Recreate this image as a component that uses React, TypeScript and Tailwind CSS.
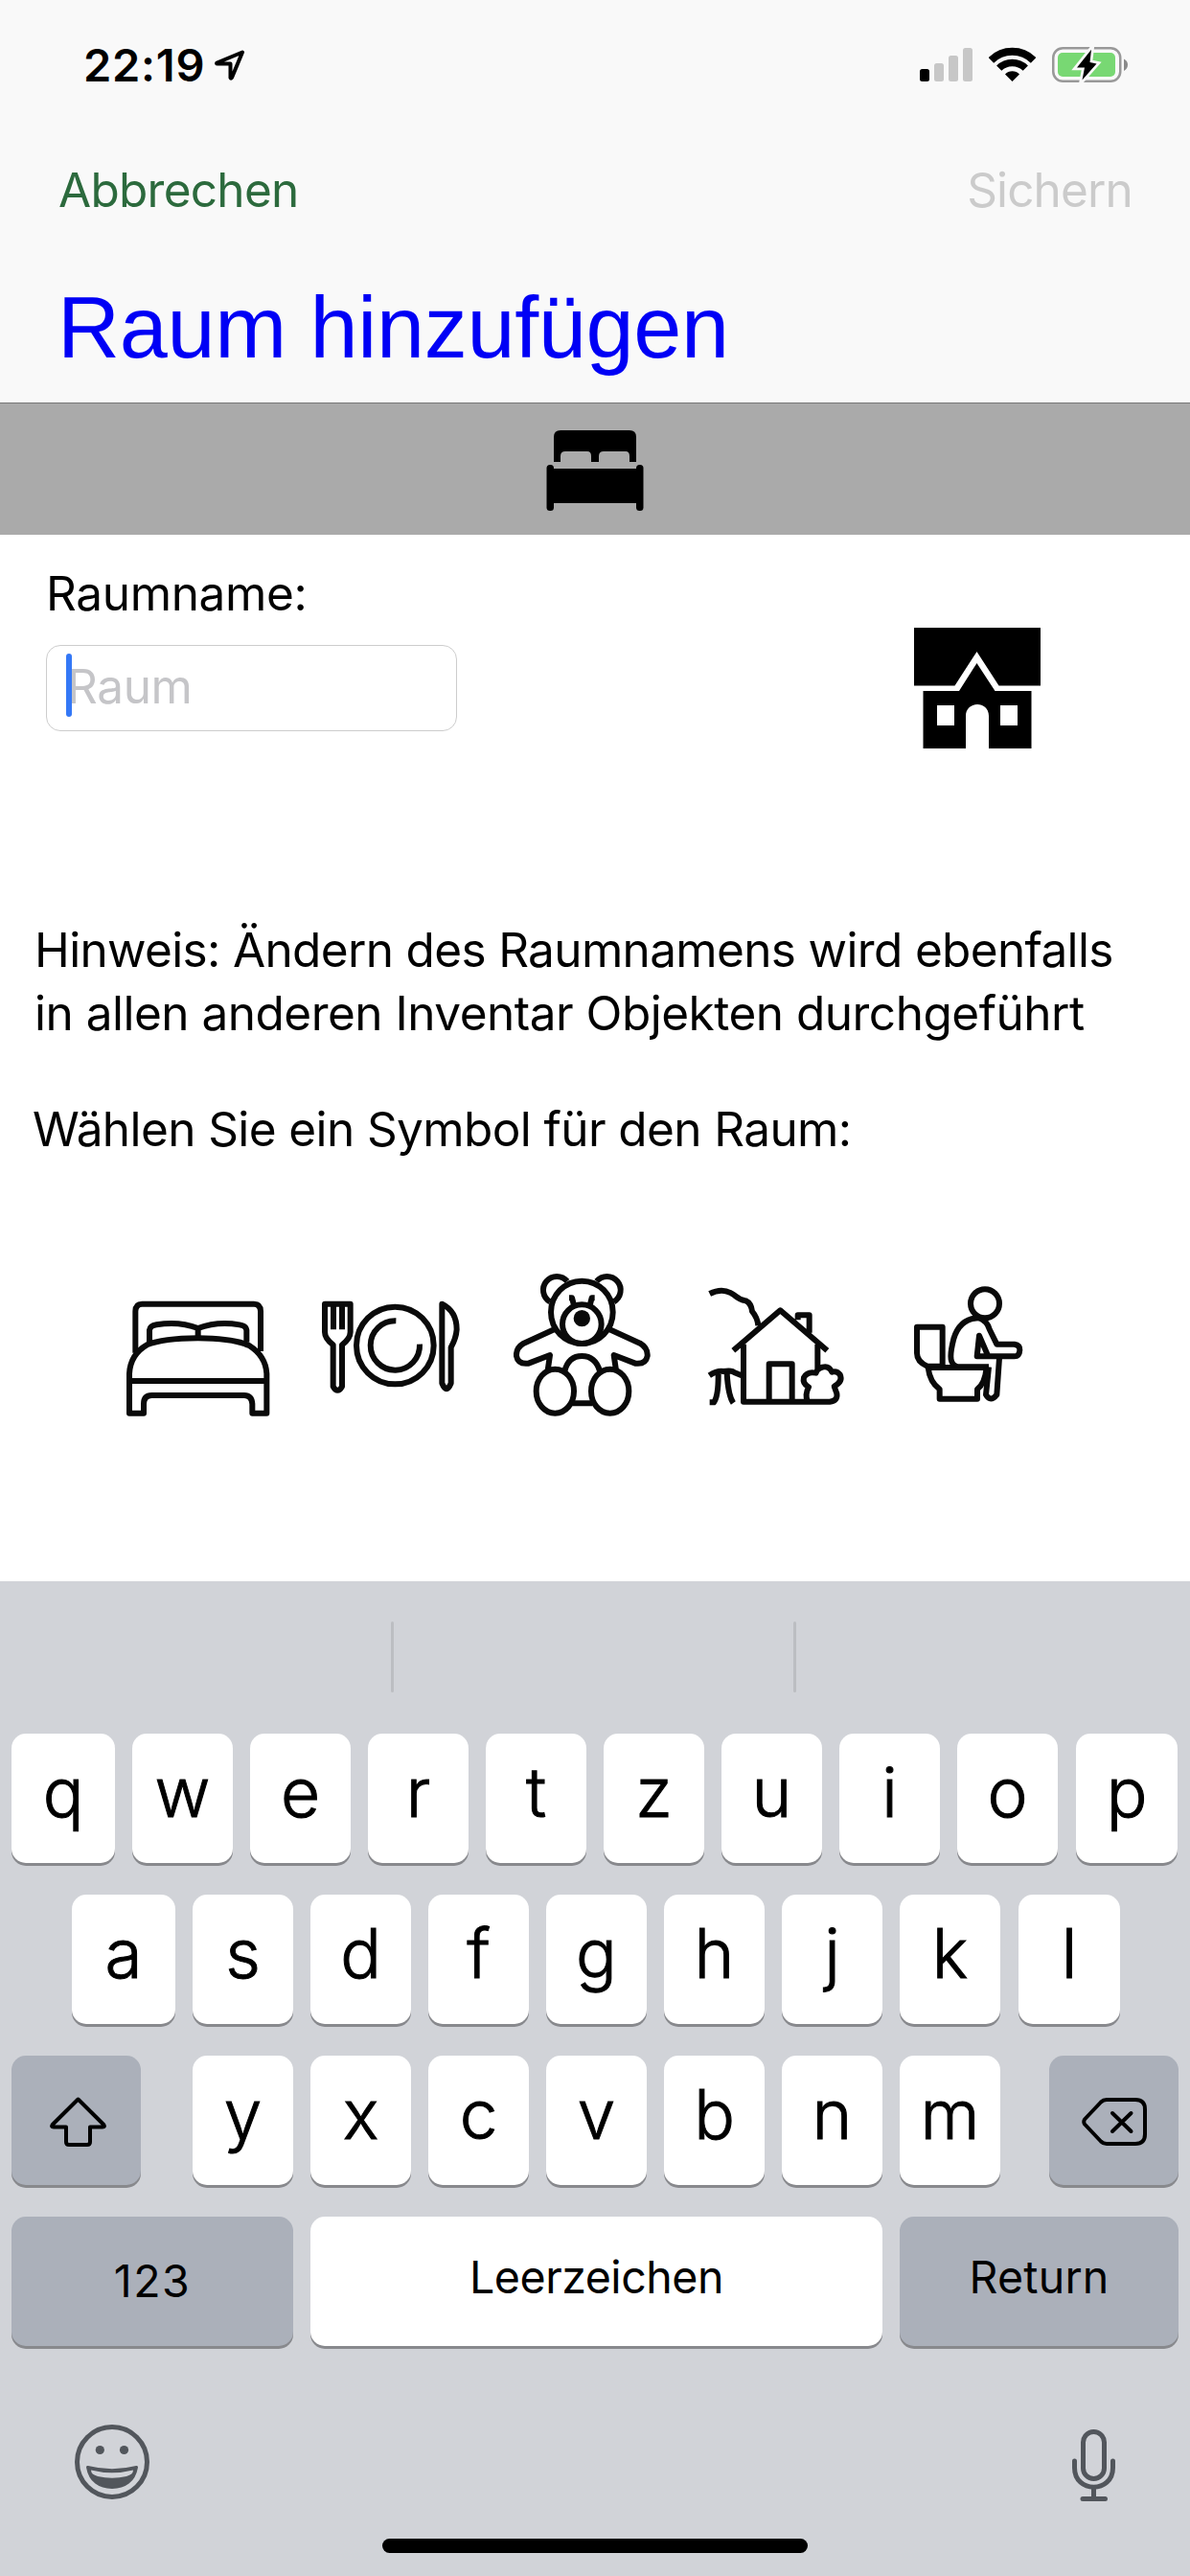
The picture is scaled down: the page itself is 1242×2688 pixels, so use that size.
import type { ReactNode } from "react";

const inter = "font-['Inter','Liberation_Sans',sans-serif]";

function StatusBar() {
  return (
    <div className="flex h-[120px] items-start justify-between pt-[40px] pr-[65px] pl-[87px]">
      <div className="flex">
        <span className="w-[137px] text-[47px] leading-[56px] font-semibold tracking-[0.77px]">22:19</span>
        <svg className="mt-[11px] h-[34px] w-[32px]" viewBox="0 0 32 34" fill="none" stroke="#000" strokeWidth="4" strokeLinejoin="round">
          <path d="M29 3.500L2.500 14.500Q1.500 15.500 3 15.500H16.500V30Q17 31.500 18 30Z" />
        </svg>
      </div>
      <div className="flex items-start gap-[17px] pt-[9px]">
        <svg className="h-[37px] w-[55px]" viewBox="0 0 55 37">
          <rect x="0" y="23" width="10" height="13" rx="2.500" />
          <g fill="#c7c7c7">
            <rect x="15" y="17" width="10" height="19" rx="2.500" />
            <rect x="30" y="9" width="10" height="27" rx="2.500" />
            <rect x="45" y="1" width="10" height="35" rx="2.500" />
          </g>
        </svg>
        <svg className="h-[37px] w-[49px]" viewBox="0 0 49 37" fill="none" stroke="#000">
          <path d="M2.400 13.900A31.300 31.300 0 0 1 46.600 13.900" strokeWidth="7.800" />
          <path d="M10.700 22.200A19.500 19.500 0 0 1 38.300 22.200" strokeWidth="7.400" />
          <path d="M24.500 36L17 28.500A10.500 10.500 0 0 1 32 28.500Z" fill="#000" stroke="none" />
        </svg>
        <svg className="h-[37px] w-[79px]" viewBox="0 0 79 37">
          <rect x="1.250" y="1.250" width="70" height="34.500" rx="10" fill="none" stroke="#999" strokeWidth="2.500" />
          <rect x="6" y="6" width="60" height="25" rx="5" fill="#78d873" />
          <path d="M75 12.500Q79 14.500 79 18.500T75 25Z" fill="#8a8a8a" />
          <path d="M41 2.700L39.500 16L46.500 17.500L31.500 34.500L34 21.500L26 21.500Z" stroke="#f9f9f9" strokeWidth="5.500" />
          <path d="M41 2.700L39.500 16L46.500 17.500L31.500 34.500L34 21.500L26 21.500Z" />
        </svg>
      </div>
    </div>
  );
}

function BedSolid() {
  return (
    <svg className="h-[84px] w-[102px]" viewBox="0 0 102 84">
      <path d="M8 33V7Q8 0 15 0H87Q94 0 94 7V33H87V27Q87 22 83 22H60Q55 22 55 27V33H47V27Q47 22 43 22H20Q15 22 15 27V33Z" />
      <rect x="4" y="40" width="94" height="36" />
      <rect x="0.500" y="36" width="7.500" height="48" rx="3.500" />
      <rect x="94" y="36" width="7.500" height="48" rx="3.500" />
    </svg>
  );
}

function HouseSolid() {
  return (
    <svg className="h-[126px] w-[132px]" viewBox="0 0 132 126">
      <path d="M0 0H132V60.500H88.500L65.500 25L42.500 60.500H0Z" />
      <path
        fillRule="evenodd"
        d="M9.500 66H47L65.500 37L84.500 66H122.500V126H78V92C78 76 54 76 54 92V126H9.500ZM24 81V102H42V81ZM90 81V102H108V81Z"
      />
    </svg>
  );
}

function RoomIcon({ viewBox, children }: { viewBox: string; children: ReactNode }) {
  return (
    <svg
      className="size-[150px] overflow-hidden"
      viewBox={viewBox}
      fill="none"
      stroke="#0a0a0a"
      strokeWidth="18"
      strokeLinejoin="round"
    >
      {children}
    </svg>
  );
}

function RoomIcons() {
  return (
    <div className="mt-[120px] flex gap-[52px] pl-[132px]">
      <RoomIcon viewBox="66 84 450 450">
        <path d="M94 335V205Q94 182 115 182H465Q486 182 486 205V330" />
        <path d="M138 302V264Q140 250 160 247Q230 235 290 258Q350 235 420 247Q440 250 442 264V302M290 258V288" />
        <path d="M75 524V400Q78 340 130 310Q180 290 290 289Q400 290 450 312Q502 345 505 400V524H460V495Q458 468 435 468H145Q120 468 120 495V524ZM80 423H500" />
      </RoomIcon>
      <RoomIcon viewBox="672 84 450 450">
        <path d="M687 182H767V270Q767 290 741 310V440Q727 465 713 440V310Q687 290 687 270ZM714 182V262M741 182V262" />
        <circle cx="907" cy="312" r="121" />
        <path d="M910 235A77 77 0 1 0 984 308" />
        <path d="M1054 182Q1100 205 1100 262Q1098 290 1082 318V430Q1068 465 1054 430Z" />
      </RoomIcon>
      <RoomIcon viewBox="108 84 450 450">
        <ellipse cx="322" cy="208" rx="97" ry="98" />
        <circle cx="322" cy="245" r="61" />
        <circle cx="322" cy="227" r="26" fill="#0a0a0a" stroke="none" />
        <path d="M282 163H291L297 186M362 163H353L347 186" />
        <path d="M276 111A42.500 42.500 0 1 0 222 175M368 111A42.500 42.500 0 1 1 422 175" />
        <path d="M235 262L140 305Q115 320 117 345Q122 372 155 368L222 342L215 390M409 262L504 305Q529 320 527 345Q522 372 489 368L422 342L429 390" />
        <ellipse cx="238" cy="455" rx="59" ry="69" />
        <ellipse cx="410" cy="455" rx="59" ry="69" />
        <path d="M268 392Q280 345 322 345Q364 345 378 392M292 493H354" />
      </RoomIcon>
      <RoomIcon viewBox="714 84 450 450">
        <path d="M722 150Q765 128 800 155Q815 168 835 172Q852 180 855 205Q872 225 874 250" />
        <path d="M796 328L943 202L1090 328M998 232V217H1034V272" />
        <path d="M828 308V488H1098Q1124 485 1120 462Q1116 452 1112 440Q1140 425 1130 403Q1120 390 1105 395Q1095 374 1075 380Q1058 385 1055 398Q1028 392 1017 412Q1012 432 1032 442Q1020 465 1028 485M1060 308V385M908 488V370H980V488" />
        <path d="M721 406Q745 390 765 393Q790 388 800 397L822 406M749 398Q750 470 735 490H722M776 398Q780 470 796 492" />
      </RoomIcon>
      <RoomIcon viewBox="184 83 450 450">
        <circle cx="448" cy="180" r="45" />
        <path d="M235 253H315V376H268Q235 362 235 335Z" />
        <path d="M430 225Q370 225 350 290Q336 345 344 362Q350 377 370 378H460M265 380H460" />
        <path d="M270 380Q275 425 306 448V478H424V448Q448 430 453 380" />
        <path d="M460 378L451 465Q465 490 485 465L493 350" />
        <path d="M430 225Q455 235 462 260L485 307H540Q558 310 557 325Q556 345 540 345H423L430 280L456 340" />
      </RoomIcon>
    </div>
  );
}

const keyBase = "h-[135px] shrink-0 rounded-[15px] shadow-[0_3px_0_#88898d] text-center";

function Letter({ char, className = "w-[105px]" }: { char: string; className?: string }) {
  return (
    <div className={`${keyBase} ${className} bg-white text-[71px] leading-[122px] font-light [-webkit-text-stroke:1px_#000]`}>
      {char}
    </div>
  );
}

function Keyboard() {
  return (
    <div className="h-[1038px] bg-[#d1d3d8]">
      <div className="flex h-[159px] pt-[42px]">
        <div className="ml-[408px] h-[74px] w-[3px] rounded-full bg-[#bcbec2]" />
        <div className="ml-[417px] h-[74px] w-[3px] rounded-full bg-[#bcbec2]" />
      </div>
      <div className="flex flex-col gap-[33px]">
        <div className="flex gap-[18px] pl-[12px]">
          <Letter char="q" className="w-[108px]" />
          {"wertzuio".split("").map((c) => (
            <Letter key={c} char={c} />
          ))}
          <Letter char="p" className="ml-px w-[106px]" />
        </div>
        <div className="flex gap-[18px] pl-[75px]">
          <Letter char="a" className="w-[108px]" />
          {"sdfghjk".split("").map((c) => (
            <Letter key={c} char={c} />
          ))}
          <Letter char="l" className="ml-px w-[106px]" />
        </div>
        <div className="flex justify-between px-[12px]">
          <div className={`${keyBase} flex w-[135px] justify-center bg-[#abb0ba]`}>
            <svg className="mt-[43px] ml-[3px] h-[53px] w-[59px]" viewBox="0 0 59 53" fill="none" stroke="#000" strokeWidth="4" strokeLinejoin="round">
              <path d="M29.500 2.500L2.800 29Q1 31.600 4 31.600H17V47Q17 50 20 50H39Q42 50 42 47V31.600H55Q58 31.600 56.200 29Z" />
            </svg>
          </div>
          <div className="flex gap-[18px] pl-[3px]">
            {"yxcvbnm".split("").map((c) => (
              <Letter key={c} char={c} />
            ))}
          </div>
          <div className={`${keyBase} flex w-[135px] justify-center bg-[#abb0ba]`}>
            <svg className="mt-[44px] ml-px h-[50px] w-[68px]" viewBox="0 0 68 50" fill="none" stroke="#000" strokeWidth="4" strokeLinejoin="round" strokeLinecap="round">
              <path d="M26 2H56Q66 2 66 12V38Q66 48 56 48H26Q22.500 48 20 45.500L3 27.500Q1.500 25 3 22.500L20 4.500Q22.500 2 26 2Z" />
              <path d="M32 16L51.500 35M51.500 16L32 35" />
            </svg>
          </div>
        </div>
        <div className="flex gap-[18px] px-[12px] text-[46.5px]">
          <div className={`${keyBase} w-[294px] bg-[#abb0ba] leading-[134px] tracking-[1.5px]`}>123</div>
          <div className={`${keyBase} w-[597px] bg-white leading-[126px] tracking-[-0.46px]`}>Leerzeichen</div>
          <div className={`${keyBase} w-[291px] bg-[#abb0ba] leading-[126px] tracking-[0.2px]`}>Return</div>
        </div>
      </div>
      <div className="mt-[82px] flex h-[119px] justify-between pr-[77px] pl-[78px]">
        <svg className="size-[78px]" viewBox="0 0 78 78" fill="none" stroke="#52565c">
          <circle cx="39" cy="39" r="36.500" strokeWidth="5" />
          <circle cx="26.300" cy="26.500" r="4.600" fill="#52565c" stroke="none" />
          <circle cx="51.500" cy="26.500" r="4.600" fill="#52565c" stroke="none" />
          <path d="M13.500 44.500Q39 51 64.500 44.500C62 59 52 65.500 39 65.500C26 65.500 16 59 13.500 44.500Z" fill="#52565c" strokeWidth="3" strokeLinejoin="round" />
          <path d="M17 47.500Q39 53 61 47.500Q61 52 54 54Q39 57.500 24 54Q17 52 17 47.500Z" fill="#d1d3d8" stroke="none" />
        </svg>
        <svg className="mt-[5px] h-[76px] w-[46px]" viewBox="0 0 46 76" fill="none" stroke="#52565c" strokeWidth="5" strokeLinecap="round">
          <rect x="11.500" y="2.500" width="22" height="49" rx="11" />
          <path d="M2.500 33V40C2.500 67 42.500 67 42.500 40V33M22.500 61V72M11 72.500H34.500" />
        </svg>
      </div>
      <div className="mx-auto h-[15px] w-[444px] rounded-full bg-black" />
    </div>
  );
}

export default function App() {
  return (
    <div className={`flex h-[2688px] w-[1242px] flex-col overflow-hidden bg-white whitespace-nowrap text-black ${inter}`}>
      <header className="h-[420px] bg-[#f9f9f9]">
        <StatusBar />
        <div className="mt-[48px] flex justify-between pr-[60px] pl-[61px] text-[49.5px] leading-[60px]">
          <span className="tracking-[-0.73px] text-[#2c6a3d]">Abbrechen</span>
          <span className="tracking-[-0.85px] text-[#cbcbcb]">Sichern</span>
        </div>
        <h1 className="mt-[64px] pl-[60px] font-['Liberation_Sans',sans-serif] text-[90px] leading-[100px] tracking-[-0.31px] text-[#0000f5]">
          Raum hinzufügen
        </h1>
      </header>
      <div className="flex h-[138px] justify-center border-t border-[#777] bg-[#aaa] pt-[28px]">
        <BedSolid />
      </div>
      <main className="h-[1092px] pt-[31px] text-[49.5px] leading-[60px]">
        <div className="flex h-[369px] items-start justify-between pr-[156px] pl-[48px]">
          <div>
            <div className="tracking-[-0.35px]">Raumname:</div>
            <div className="relative mt-[24px] h-[90px] w-[429px] rounded-[15px] border border-[#cdcdcd] pt-[12px] pl-[21px] tracking-[-0.39px] text-[#c5c5c8]">
              Raum
              <span className="absolute top-[8px] left-[20px] h-[66px] w-[6px] rounded-full bg-[#3478f6]" />
            </div>
          </div>
          <div className="mt-[66px]">
            <HouseSolid />
          </div>
        </div>
        <div className="pl-[36px] leading-[66px]">
          <p className="tracking-[-0.65px]">Hinweis: Ändern des Raumnamens wird ebenfalls</p>
          <p className="tracking-[-0.5px]">in allen anderen Inventar Objekten durchgeführt</p>
        </div>
        <p className="mt-[58px] pl-[34px] tracking-[-0.6px]">Wählen Sie ein Symbol für den Raum:</p>
        <RoomIcons />
      </main>
      <Keyboard />
    </div>
  );
}
